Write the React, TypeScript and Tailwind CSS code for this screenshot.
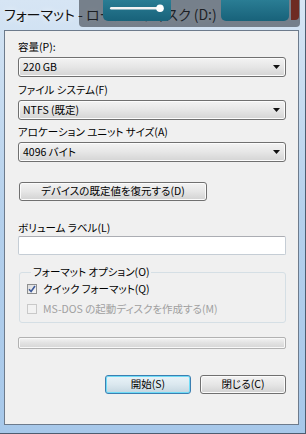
import type { ReactNode } from 'react'

const FONT = "font-['Noto_Sans_CJK_JP','Noto_Sans',sans-serif] [font-feature-settings:'palt']"

function Combo({ value }: { value: string }) {
  return (
    <div className="mt-[2px] flex h-[20px] w-full items-center justify-between rounded-[3px] border border-[#707070] bg-gradient-to-b from-[#f3f3f3] via-[#e6e6e6] to-[#d4d4d4] pl-[4px] pr-[5px] text-[10.5px] leading-none text-black shadow-[inset_0_0_0_1px_#fcfcfc]">
      <span>{value}</span>
      <svg width="7" height="4" viewBox="0 0 7 4">
        <path d="M0 0h7L3.5 4z" fill="#111" />
      </svg>
    </div>
  )
}

function Label({ children, className = '' }: { children: ReactNode; className?: string }) {
  return <div className={`h-[16px] text-[10.5px] leading-[16px] text-black ${className}`}>{children}</div>
}

function WinButton({ children, primary, className = '' }: { children: ReactNode; primary?: boolean; className?: string }) {
  return (
    <div
      className={`flex h-[19px] items-center justify-center rounded-[3px] border text-[10.5px] leading-none text-black ${
        primary
          ? 'border-[#3c7fb1] bg-gradient-to-b from-[#e9f3f8] via-[#dbe8ef] to-[#c4d6e0] shadow-[inset_0_0_0_1px_#6fdcf7]'
          : 'border-[#707070] bg-gradient-to-b from-[#f3f3f3] via-[#e6e6e6] to-[#d2d2d2] shadow-[inset_0_0_0_1px_#fbfbfb]'
      } ${className}`}
    >
      {children}
    </div>
  )
}

function Check({ checked, disabled, children }: { checked?: boolean; disabled?: boolean; children: ReactNode }) {
  return (
    <div className={`flex h-[16px] items-center gap-[6px] text-[10.5px] leading-none ${disabled ? 'text-[#a0a0a0]' : 'text-black'}`}>
      <div
        className={`flex h-[10px] w-[10px] items-center justify-center border ${
          disabled ? 'border-[#c9c9c9] bg-[#f2f2f2]' : 'border-[#8e8f8f] bg-gradient-to-br from-[#dcdcdc] to-[#f8f8f8]'
        }`}
      >
        {checked && (
          <svg width="8" height="8" viewBox="0 0 8 8">
            <path d="M1 4.2 3.1 6.5 7 1" stroke="#3d5a9a" strokeWidth="1.6" fill="none" />
          </svg>
        )}
      </div>
      <span>{children}</span>
    </div>
  )
}

export default function App() {
  return (
    <div className={`relative h-[434px] w-[306px] overflow-hidden border-b border-r border-[#4d5d70] bg-gradient-to-b from-[#d6e5f4] via-[#b4d0ec] to-[#a7c8ea] ${FONT}`}>
      {/* title bar */}
      <div className="flex h-[30px] items-center pb-[2px] pl-[4px] text-[14px] text-[#111] [text-shadow:0_0_6px_#ffffff]">
        フォーマット - ローカル ディスク (D:)
      </div>

      {/* overlay strip on title bar */}
      <div className="absolute left-[79px] top-0 h-[27px] w-[221px] rounded-b-[4px] bg-[rgba(40,46,52,0.55)]" />
      <div className="absolute left-[103px] top-0 h-[21px] w-[68px] rounded-b-[5px] bg-gradient-to-b from-[#2a7d94] to-[#18627a]">
        <svg className="absolute left-[6px] top-[3px]" width="56" height="10" viewBox="0 0 56 10">
          <rect x="1" y="4" width="50" height="2.5" rx="1.2" fill="#f4f4f4" />
          <circle cx="51" cy="5.2" r="3.8" fill="#ffffff" />
        </svg>
      </div>
      <div className="absolute left-[221px] top-0 h-[21px] w-[68px] rounded-b-[5px] bg-gradient-to-b from-[#2a7d94] to-[#18627a]" />
      <div className="absolute left-[291px] top-0 h-[20px] w-[8px] rounded-br-[4px] bg-[#6e2b22]" />

      {/* client area */}
      <div className="ml-[4px] mr-[6px] flex h-[395px] flex-col border border-[#6d7b8c] bg-[#f0f0f0] pl-[13px] pr-[12px]">
        <Label className="mt-[8px]">容量(P):</Label>
        <Combo value="220 GB" />

        <Label className="mt-[5px]">ファイル システム(F)</Label>
        <Combo value="NTFS (既定)" />

        <Label className="mt-[4px]">アロケーション ユニット サイズ(A)</Label>
        <Combo value="4096 バイト" />

        <WinButton className="ml-[1px] mt-[20px] w-[188px]">デバイスの既定値を復元する(D)</WinButton>

        <Label className="mt-[19px]">ボリューム ラベル(L)</Label>
        <div className="h-[19px] w-full rounded-[2px] border border-[#c5cdd5] border-t-[#abadb3] bg-white" />

        <fieldset className="ml-[1px] mt-[9px] rounded-[3px] border border-[#d5dfe5] pb-[5px] pl-[7px]">
          <legend className="ml-[4px] h-[16px] px-[2px] text-[10.5px] leading-[16px] text-black">フォーマット オプション(O)</legend>
          <div className="mt-[1px]">
            <Check checked>クイック フォーマット(Q)</Check>
          </div>
          <div className="mt-[4px]">
            <Check disabled>MS-DOS の起動ディスクを作成する(M)</Check>
          </div>
        </fieldset>

        <div className="mt-[14px] h-[12px] w-full rounded-[2px] border border-[#b2b2b2] bg-gradient-to-b from-[#f4f4f4] via-[#e2e2e2] to-[#d6d6d6] shadow-[inset_0_0_0_1px_#f8f8f8]" />

        <div className="mt-[26px] flex justify-end gap-[9px]">
          <WinButton primary className="w-[86px]">開始(S)</WinButton>
          <WinButton className="w-[86px]">閉じる(C)</WinButton>
        </div>
      </div>
    </div>
  )
}
